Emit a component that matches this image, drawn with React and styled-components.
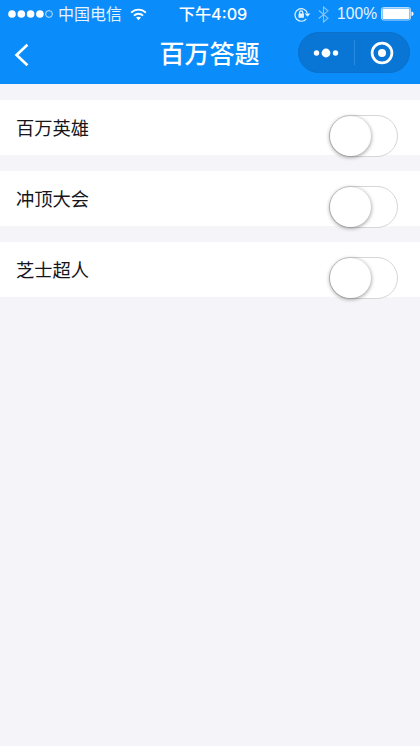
import React from 'react';
import styled, { createGlobalStyle } from 'styled-components';

const GlobalStyle = createGlobalStyle`
  * { box-sizing: border-box; }
  body {
    margin: 0;
    background: #f5f4f8;
    font-family: Inter, "Noto Sans CJK SC", sans-serif;
  }
`;

const Screen = styled.main`
  min-height: 746px;
  background: #f5f4f8;
`;

const Header = styled.header`
  height: 84px;
  background: #0a8dfb;
  color: #fff;
`;

const StatusBar = styled.div`
  display: grid;
  grid-template-columns: 1fr auto 1fr;
  align-items: center;
  height: 28px;
  padding: 0 6px 0 8px;
  font-size: 16px;
  line-height: 28px;
`;

const StatusGroup = styled.div`
  display: flex;
  align-items: center;
  justify-content: ${(p) => (p.$end ? 'flex-end' : 'flex-start')};
  color: #e4f3ff;
  white-space: nowrap;

  svg { display: block; flex: none; }
`;

const Carrier = styled.span`
  margin: 0 8px 0 5px;
`;

const Clock = styled.span`
  margin-left: 4px;
  font-size: 16.2px;
  font-weight: 500;
`;

const Percent = styled.span`
  margin: 0 4px 0 8px;
  font-family: "Liberation Sans", sans-serif;
  font-size: 15.6px;
`;

const Gap = styled.span`
  width: 7px;
`;

const NavBar = styled.div`
  display: grid;
  grid-template-columns: 1fr auto 1fr;
  align-items: center;
  height: 56px;
  padding: 0 10px 6px 14px;
`;

const BackButton = styled.button`
  display: flex;
  width: 16px;
  padding: 0;
  margin-top: 4px;
  border: 0;
  background: none;
  color: inherit;
`;

const Title = styled.h1`
  margin: 2px 0 0 -5px;
  font-size: 25px;
  font-weight: 500;
  line-height: 36px;
`;

const Capsule = styled.div`
  display: flex;
  align-items: center;
  justify-self: end;
  width: 112px;
  height: 41px;
  margin-top: -1px;
  border: 1px solid #0a70c9;
  border-radius: 21px;
  background: #0976d6;
`;

const CapsuleButton = styled.button`
  display: flex;
  flex: 1;
  align-items: center;
  justify-content: center;
  height: 100%;
  padding: 0;
  border: 0;
  background: none;
`;

const Divider = styled.span`
  width: 1px;
  height: 25px;
  background: #2a8ae0;
`;

const List = styled.section`
  display: flex;
  flex-direction: column;
  gap: 16px;
  padding-top: 16px;
`;

const Row = styled.div`
  display: flex;
  align-items: flex-start;
  justify-content: space-between;
  height: 55px;
  padding: 15px 22px 0 16px;
  background: #fff;
`;

const Label = styled.span`
  color: #15151b;
  font-size: 18.3px;
  line-height: 26px;
`;

const Switch = styled.button`
  display: flex;
  flex: none;
  align-items: center;
  width: 69px;
  height: 42px;
  padding: 0;
  border: 1.5px solid #d3d7d5;
  border-radius: 21px;
  background: #fff;
`;

const Knob = styled.span`
  flex: none;
  width: 41px;
  height: 40px;
  border-radius: 50%;
  background: #fff;
  box-shadow: 0 1px 4px rgba(0, 0, 0, 0.45);
`;

const SignalDots = () => (
  <svg width="45" height="12" viewBox="0 0 45 12" fill="#fff">
    <circle cx="4" cy="6" r="3.8" />
    <circle cx="13.3" cy="6" r="3.8" />
    <circle cx="22.6" cy="6" r="3.8" />
    <circle cx="31.9" cy="6" r="3.8" />
    <circle cx="41" cy="6" r="3.4" fill="none" stroke="#d2eaff" strokeWidth="0.9" />
  </svg>
);

const WifiIcon = () => (
  <svg width="17" height="13" viewBox="0 0 18 13" fill="none" stroke="#fff" strokeWidth="2">
    <path d="M1.2 4.6 C5.6 .2 12.4 .2 16.8 4.6" />
    <path d="M4.2 7.7 C6.9 5 11.1 5 13.8 7.7" />
    <path d="M9 12.5 L6.4 9.8 C7.8 8.5 10.2 8.5 11.6 9.8 Z" fill="#fff" stroke="none" />
  </svg>
);

const RotationLockIcon = () => (
  <svg width="17" height="15" viewBox="0 0 17 15" fill="none" stroke="#e4f3ff" strokeWidth="1.2">
    <path d="M12.3 11.8 A6.3 6.3 0 1 1 13.4 6.4" />
    <path d="M10.7 6.5 H16.3 L13.5 9.8 Z" fill="#e4f3ff" stroke="none" />
    <rect x="4.5" y="6.5" width="5.4" height="4.3" rx="0.5" fill="#e4f3ff" stroke="none" />
    <path d="M5.6 7 V5.5 A1.6 1.6 0 0 1 8.8 5.5 V7" />
  </svg>
);

const BluetoothIcon = () => (
  <svg width="11" height="17" viewBox="0 0 11 17" fill="none" stroke="#84c4fa" strokeWidth="1.1">
    <path d="M.8 4.5 L10 12.2 L5.5 16 V1 L10 4.8 L.8 12.5" />
  </svg>
);

const BatteryIcon = () => (
  <svg width="33" height="14" viewBox="0 0 33 14">
    <rect x=".5" y=".5" width="29" height="12.5" rx="2" fill="none" stroke="#b9dcfa" />
    <rect x="1.5" y="1.5" width="27" height="10.5" rx="1" fill="#fff" />
    <path d="M30.5 4.5 C33.2 5 33.2 8.5 30.5 9 Z" fill="#fff" />
  </svg>
);

const BackIcon = () => (
  <svg width="16" height="24" viewBox="0 0 16 24" fill="none" stroke="#fff" strokeWidth="2.7">
    <path d="M13.4 1.7 L2.6 12 L13.4 22.3" />
  </svg>
);

const MoreIcon = () => (
  <svg width="26" height="10" viewBox="0 0 26 10" fill="#fff">
    <circle cx="3.5" cy="5" r="2.7" />
    <circle cx="13" cy="5" r="4.4" />
    <circle cx="22.5" cy="5" r="2.7" />
  </svg>
);

const TargetIcon = () => (
  <svg width="24" height="24" viewBox="0 0 24 24">
    <circle cx="12" cy="12" r="9.9" fill="none" stroke="#fff" strokeWidth="2.7" />
    <circle cx="12" cy="12" r="4" fill="#fff" />
  </svg>
);

const quizzes = ['百万英雄', '冲顶大会', '芝士超人'];

export default function App() {
  return (
    <Screen>
      <GlobalStyle />
      <Header>
        <StatusBar>
          <StatusGroup>
            <SignalDots />
            <Carrier>中国电信</Carrier>
            <WifiIcon />
          </StatusGroup>
          <Clock>下午4:09</Clock>
          <StatusGroup $end>
            <RotationLockIcon />
            <Gap />
            <BluetoothIcon />
            <Percent>100%</Percent>
            <BatteryIcon />
          </StatusGroup>
        </StatusBar>
        <NavBar>
          <BackButton aria-label="返回"><BackIcon /></BackButton>
          <Title>百万答题</Title>
          <Capsule>
            <CapsuleButton aria-label="更多"><MoreIcon /></CapsuleButton>
            <Divider />
            <CapsuleButton aria-label="关闭"><TargetIcon /></CapsuleButton>
          </Capsule>
        </NavBar>
      </Header>
      <List>
        {quizzes.map((name) => (
          <Row key={name}>
            <Label>{name}</Label>
            <Switch role="switch" aria-checked="false" aria-label={name}>
              <Knob />
            </Switch>
          </Row>
        ))}
      </List>
    </Screen>
  );
}
